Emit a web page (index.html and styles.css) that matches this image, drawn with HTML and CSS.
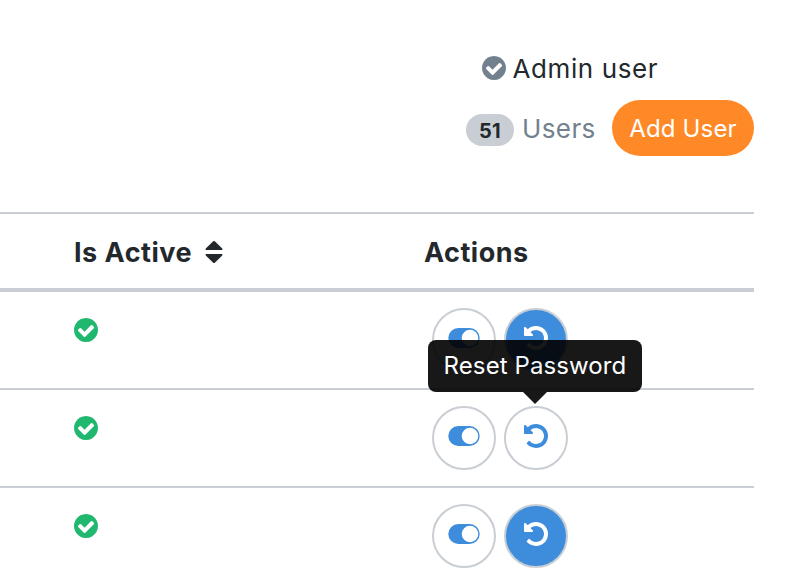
FILE: index.html
```html
<!DOCTYPE html>
<html lang="en">
<head>
<meta charset="utf-8">
<title>Users</title>
<link rel="stylesheet" href="styles.css">
</head>
<body>
<svg class="defs" aria-hidden="true">
  <symbol id="check" viewBox="128 128 1536 1536"><path fill="currentColor" d="M1412 734q0-28-18-46l-91-90q-19-19-45-19t-45 19l-408 407-226-226q-19-19-45-19t-45 19l-91 90q-18 18-18 46 0 27 18 45l362 362q19 19 45 19 27 0 46-19l543-543q18-18 18-45zm252 162q0 209-103 385.500t-279.500 279.500-385.500 103-385.500-103-279.500-279.500-103-385.500 103-385.500 279.500-279.500 385.500-103 385.500 103 279.500 279.500 103 385.500z"/></symbol>
  <symbol id="undo" viewBox="128 128 1536 1536"><path fill="currentColor" d="M1664 896q0 156-61 298t-164 245-245 164-298 61q-172 0-327-72.500t-264-204.500q-7-10-6.500-22.500t8.500-20.500l137-138q10-9 25-9 16 2 23 12 73 95 179 147t225 52q104 0 198.500-40.500t163.500-109.500 109.500-163.500 40.500-198.500-40.500-198.500-109.500-163.500-163.500-109.500-198.500-40.500q-98 0-188 35.500t-160 101.500l137 138q31 30 14 69-17 40-59 40h-448q-26 0-45-19t-19-45v-448q0-42 40-59 39-17 69 14l130 129q107-101 244.500-156.500t284.500-55.500q156 0 298 61t245 164 164 245 61 298z"/></symbol>
  <symbol id="toggle" viewBox="0 0 32 20"><path fill="currentColor" fill-rule="evenodd" d="M10.300 0h11.400a10 10 0 0 1 0 20H10.300a10 10 0 0 1 0-20zM22 1.700a8.300 8.300 0 1 0 0 16.600 8.300 8.300 0 0 0 0-16.600z"/></symbol>
</svg>
<header class="toolbar">
  <div class="account"><svg class="icon-check muted"><use href="#check"/></svg><span>Admin user</span></div>
  <div class="summary">
    <span class="badge">51</span>
    <span class="label">Users</span>
    <button class="add">Add User</button>
  </div>
</header>
<main class="table">
  <div class="row head">
    <div class="active-col"><span class="th-active">Is Active</span><svg class="sort" viewBox="0 0 18 24"><path fill="currentColor" d="M8.200 1.300Q9 .6 9.800 1.300L17 8.300Q18.300 10 16.500 10H1.500Q-.3 10 1 8.300zM8.200 22.700Q9 23.400 9.800 22.700L17 15.700Q18.300 14 16.500 14H1.500Q-.3 14 1 15.700z"/></svg></div>
    <div class="th-actions">Actions</div>
  </div>
  <div class="row">
    <div class="active-col"><svg class="icon-check"><use href="#check"/></svg></div>
    <div class="actions"><button class="action"><svg class="toggle"><use href="#toggle"/></svg></button><button class="action filled"><svg class="undo"><use href="#undo"/></svg></button></div>
  </div>
  <div class="row">
    <div class="active-col"><svg class="icon-check"><use href="#check"/></svg></div>
    <div class="actions"><button class="action"><svg class="toggle"><use href="#toggle"/></svg></button><button class="action"><svg class="undo"><use href="#undo"/></svg></button><div class="tooltip"><span>Reset Password</span></div></div>
  </div>
  <div class="row">
    <div class="active-col"><svg class="icon-check"><use href="#check"/></svg></div>
    <div class="actions"><button class="action"><svg class="toggle"><use href="#toggle"/></svg></button><button class="action filled"><svg class="undo"><use href="#undo"/></svg></button></div>
  </div>
</main>
</body>
</html>
```
FILE: styles.css
```css
* { box-sizing: border-box; }
body { margin: 0; height: 582px; overflow: hidden; background: #fff; color: #23282c; font-family: Inter, "Liberation Sans", sans-serif; font-size: 26px; }
button { padding: 0; font: inherit; }
svg { display: block; flex: none; }
.defs { position: absolute; width: 0; height: 0; }
.toolbar { height: 212px; padding: 48px 32px 0 466px; }
.account { display: flex; align-items: center; height: 40px; padding-left: 15.5px; gap: 7px; letter-spacing: .6px; }
.icon-check { width: 24px; height: 24px; color: #20b76f; }
.icon-check.muted { color: #73818f; }
.summary { display: flex; align-items: center; margin-top: 12px; height: 56px; }
.badge { width: 48px; height: 32px; margin-top: 4px; border-radius: 16px; background: #c8ced3; font-size: 20px; font-weight: 700; line-height: 34px; letter-spacing: .4px; text-align: center; }
.label { width: 90px; margin-left: 8px; color: #73818f; letter-spacing: .4px; }
.add { width: 142px; height: 56px; border: 0; border-radius: 28px; background: #ff8926; color: #fff; font-size: 24px; letter-spacing: .15px; }
.table { width: 754px; }
.row { display: flex; height: 98px; padding-left: 74px; border-top: 2px solid #c8ced3; }
.row.head { height: 80px; border-bottom: 4px solid #c8ced3; font-size: 27px; font-weight: 700; line-height: 77px; letter-spacing: .5px; }
.head + .row { height: 96px; border-top: 0; }
.active-col { display: flex; width: 351px; padding-top: 26px; }
.head .active-col { padding: 0; align-items: flex-start; }
.th-active { width: 118px; white-space: nowrap; }
.th-actions { margin-left: -1px; }
.sort { width: 18px; height: 24px; margin: 26px 0 0 12.5px; }
.actions { position: relative; display: flex; gap: 8px; padding: 16px 0 0 7px; }
.action { display: flex; justify-content: center; width: 64px; height: 64px; padding-top: 16px; border: 2px solid #c8ced3; border-radius: 50%; background: #fff; color: #3e8ddd; }
.action.filled { background: #3e8ddd; color: #fff; }
.toggle { width: 32px; height: 20px; margin-top: 2px; }
.undo { width: 24px; height: 24px; }
.tooltip { position: absolute; z-index: 2; top: -50px; left: 3px; width: 214px; height: 52px; border-radius: 8px; background: #000; color: #fff; opacity: .9; font-size: 24px; line-height: 52px; text-align: center; letter-spacing: .1px; white-space: nowrap; }
.tooltip::after { content: ""; position: absolute; top: 52px; left: 95px; border: 12px solid transparent; border-top-color: #000; border-bottom: 0; }
```
